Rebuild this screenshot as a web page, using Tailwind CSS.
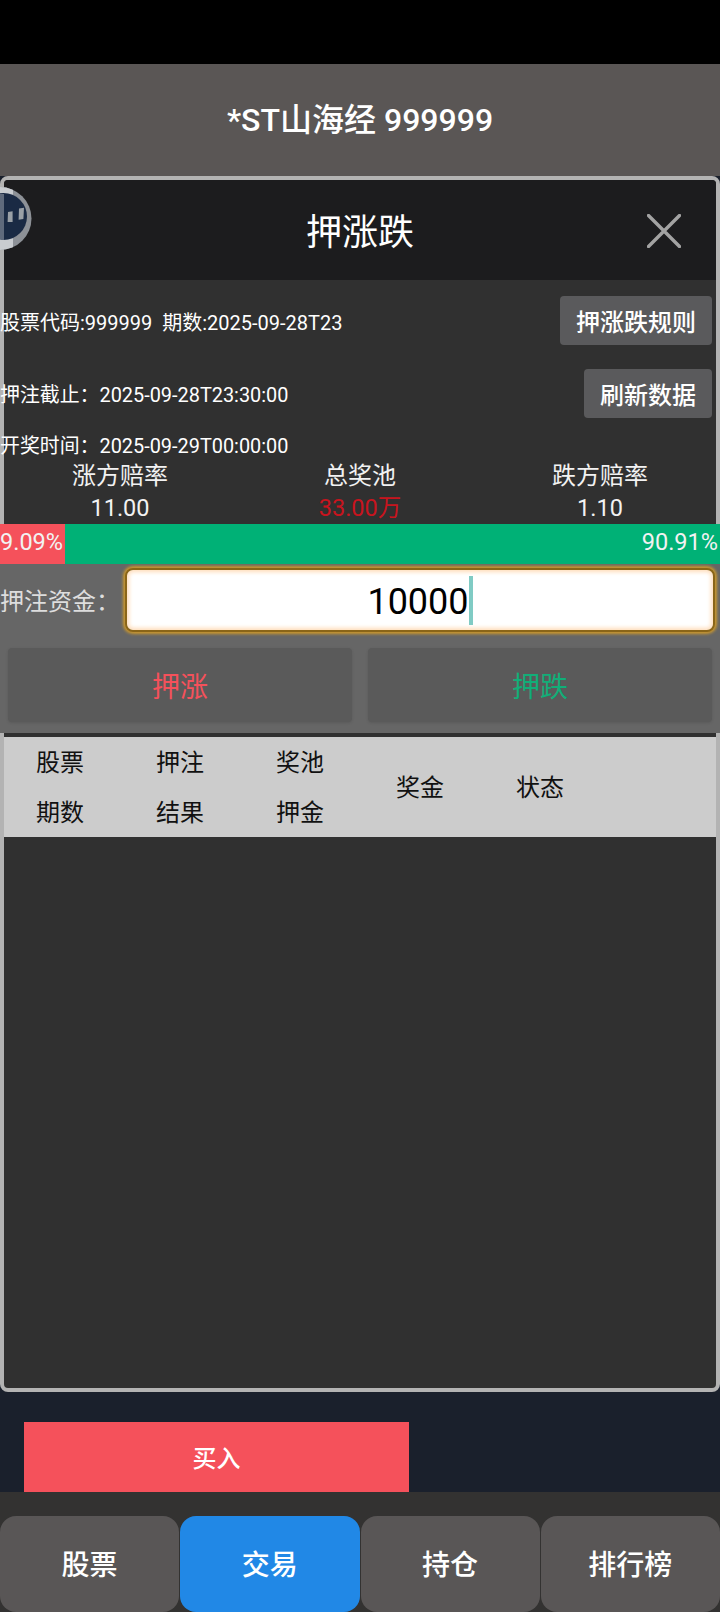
<!DOCTYPE html>
<html lang="zh-CN">
<head>
<meta charset="utf-8">
<title>押涨跌</title>
<script src="https://cdn.jsdelivr.net/npm/@tailwindcss/browser@4"></script>
</head>
<body class="m-0">
<div class="relative w-[720px] h-[1612px] overflow-hidden bg-[#1a202c] text-white font-['Roboto','Noto_Sans_CJK_SC',sans-serif]">
  <div class="h-16 bg-black"></div>
  <div class="h-[112px] bg-[#5a5655] flex items-center justify-center text-[32px] font-medium">*ST山海经 999999</div>

  <div class="h-[1216px] border-4 border-[#b3b3b3] rounded-lg bg-[#303030] flex flex-col">
    <div class="relative h-[100px] shrink-0 rounded-t bg-[#1c1c1e] flex items-center justify-center text-[36px] leading-none pt-[6px]">
      押涨跌
      <svg class="absolute left-[643px] top-[34px]" width="34" height="34" viewBox="0 0 34 34" fill="none" stroke="#a3a3a3" stroke-width="3.4" stroke-linecap="round"><path d="M1.5 1.5 32.5 32.5M32.5 1.5 1.5 32.5"/></svg>
    </div>

    <div class="-mx-1 h-[244px] shrink-0 flex flex-col pt-4 relative">
      <div class="h-[49px] flex items-center justify-between pr-2 text-[20px]">
        <span class="pt-1">股票代码:999999&nbsp;&nbsp;期数:2025-09-28T23</span>
        <span class="w-[152px] h-[49px] pt-1 rounded bg-[#5a5a5c] flex items-center justify-center text-[24px] font-medium">押涨跌规则</span>
      </div>
      <div class="h-[49px] mt-6 flex items-center justify-between pr-2 text-[19.9px]">
        <span class="pt-1">押注截止：2025-09-28T23:30:00</span>
        <span class="w-[128px] h-[49px] pt-1 rounded bg-[#5a5a5c] flex items-center justify-center text-[24px] font-medium">刷新数据</span>
      </div>
      <div class="h-[28px] mt-[13px] pt-1 flex items-center text-[19.9px]">开奖时间：2025-09-29T00:00:00</div>
      <div class="grid grid-cols-3 text-center text-[24px] leading-[32px] text-[#f2f2f2]">
        <div class="pt-px h-[32px]">涨方赔率</div><div class="pt-px h-[32px]">总奖池</div><div class="pt-px h-[32px]">跌方赔率</div>
        <div class="mt-px text-[23.5px]">11.00</div><div class="mt-px text-[23.5px] text-[#c8141e]">33.00万</div><div class="mt-px text-[23.5px]">1.10</div>
      </div>
    </div>

    <div class="-mx-1 h-10 shrink-0 flex text-[23.5px] leading-[36px] text-[#f2f2f2]">
      <div class="w-[65px] bg-[#f5515b] whitespace-nowrap">9.09%</div>
      <div class="flex-1 bg-[#00b176] text-right pr-0.5">90.91%</div>
    </div>

    <div class="-mx-1 h-[169px] shrink-0 bg-[#666666] pt-1">
      <div class="h-16 flex items-center text-[24px] text-[#dddddd]">
        <span class="w-[125px] shrink-0 pt-1">押注资金：</span>
        <div class="w-[590px] h-16 rounded-lg border-2 border-[#8a6518] bg-white shadow-[0_0_3px_2px_#c9962e,inset_0_0_4px_2px_#ffdcb8] flex items-center justify-center text-[36px] text-black">
          <span class="pt-1">10000</span><span class="w-1 h-[49px] bg-[#80cbc4]"></span>
        </div>
      </div>
      <div class="mt-4 mx-2 grid grid-cols-2 gap-4">
        <div class="h-[74px] pt-[6px] rounded bg-[#5a5a5a] shadow-[0_1px_3px_rgba(0,0,0,0.12)] flex items-center justify-center text-[28px] text-[#f5515b]">押涨</div>
        <div class="h-[74px] pt-[6px] rounded bg-[#5a5a5a] shadow-[0_1px_3px_rgba(0,0,0,0.12)] flex items-center justify-center text-[28px] text-[#12ae78]">押跌</div>
      </div>
    </div>

    <div class="mt-1 h-[100px] shrink-0 bg-[#cccccc] text-[24px] text-[#111111] pt-px">
      <div class="-ml-1 grid grid-cols-[repeat(5,120px)] h-[99px] text-center items-center">
        <div class="leading-[50px]"><div>股票</div><div>期数</div></div>
        <div class="leading-[50px]"><div>押注</div><div>结果</div></div>
        <div class="leading-[50px]"><div>奖池</div><div>押金</div></div>
        <div>奖金</div>
        <div>状态</div>
      </div>
    </div>
    <div class="flex-1 rounded-b"></div>
  </div>

  <div class="h-[100px] pt-[30px] pl-6">
    <div class="w-[385px] h-[70px] pt-1 bg-[#f5515b] flex items-center justify-center text-[24px] font-medium">买入</div>
  </div>

  <div class="h-[120px] bg-[#333231] pt-6 grid grid-cols-4 gap-px text-[28px] font-medium">
    <div class="rounded-2xl pt-1 bg-[#595656] flex items-center justify-center">股票</div>
    <div class="rounded-2xl pt-1 bg-[#2188e6] flex items-center justify-center">交易</div>
    <div class="rounded-2xl pt-1 bg-[#595656] flex items-center justify-center">持仓</div>
    <div class="rounded-2xl pt-1 bg-[#595656] flex items-center justify-center">排行榜</div>
  </div>

  <svg class="absolute left-0 top-[186px]" width="34" height="66" viewBox="0 0 34 66">
    <defs><clipPath id="disc"><circle cx="0" cy="32.5" r="31.5"/></clipPath></defs>
    <g clip-path="url(#disc)">
      <rect x="0" y="0" width="34" height="66" fill="#8d9197"/>
      <rect x="0" y="0" width="13" height="66" fill="#c9ccd0"/>
      <circle cx="3.5" cy="30.5" r="23.5" fill="#1a2a44"/>
      <rect x="0" y="8" width="4" height="46" fill="#ffffff" opacity="0.3"/>
    </g>
    <path d="M8 26 12.6 25.2V36H7.6Z M19 22.6 24 21.8 23.4 33 18.6 33.8Z" fill="#9aa0a6"/>
  </svg>
</div>
</body>
</html>
